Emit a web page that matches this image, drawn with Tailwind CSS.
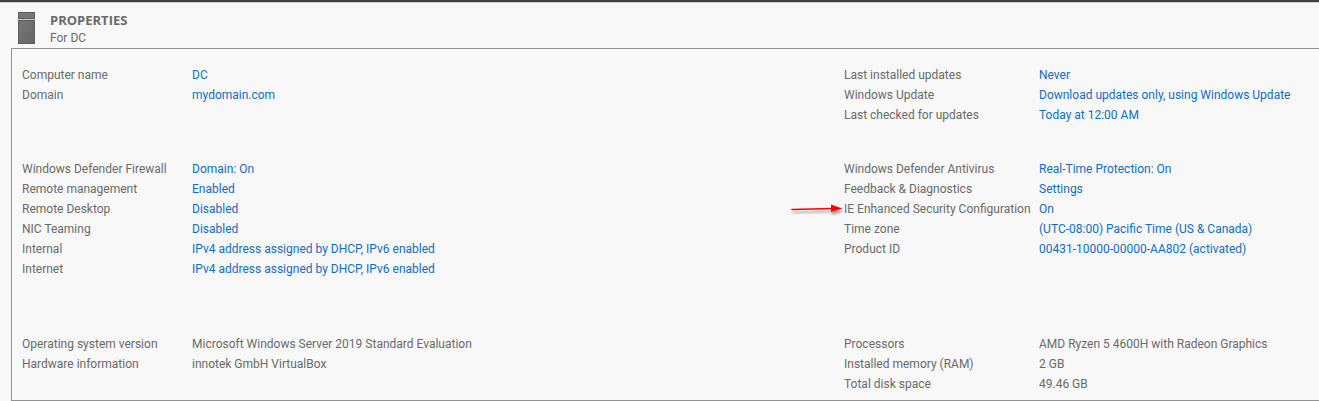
<!DOCTYPE html>
<html lang="en">
<head>
<meta charset="utf-8">
<meta name="viewport" content="width=device-width, initial-scale=1">
<title>Properties for DC</title>
<script src="https://cdn.jsdelivr.net/npm/@tailwindcss/browser@4"></script>
</head>
<body class="min-h-screen bg-[#f8f8f8] font-['Roboto','Noto_Sans',sans-serif] text-[12px] leading-5 text-[#6a6a6a]">
<main class="flex min-h-screen flex-col border-t-2 border-[#414141]">
  <header class="flex h-[46px] items-start gap-[15px] border-t border-[#d0d0d0] pt-[9px] pl-[18px]">
    <svg class="h-8 w-[17px] shrink-0" viewBox="0 0 17 32" aria-hidden="true">
      <defs><linearGradient id="tower" x1="0" y1="0" x2="1" y2="1"><stop offset="0" stop-color="#777"/><stop offset="1" stop-color="#666"/></linearGradient></defs>
      <rect x=".5" y=".5" width="16" height="6" fill="#777" stroke="#5d5d5d"/>
      <rect y="7" width="17" height="1" fill="#c9cccb"/>
      <rect x=".5" y="8.500" width="16" height="23" fill="url(#tower)" stroke="#5d5d5d"/>
    </svg>
    <div>
      <h1 class="font-['Open_Sans','Noto_Sans',sans-serif] text-[13px] leading-4 font-bold">PROPERTIES</h1>
      <p class="leading-5">For DC</p>
    </div>
  </header>
  <section class="ml-[11px] grid grow grid-cols-[822fr_475fr] content-start border-y border-l border-[#929292] pt-4 pb-1.5 pl-2.5">
    <dl class="grid grid-cols-[170px_1fr] content-start">
      <dt>Computer name</dt><dd><a href="#" class="text-[#106ebe]">DC</a></dd>
      <dt>Domain</dt><dd><a href="#" class="text-[#106ebe]">mydomain.com</a></dd>
    </dl>
    <dl class="grid grid-cols-[195px_1fr] content-start whitespace-nowrap">
      <dt>Last installed updates</dt><dd><a href="#" class="text-[#106ebe]">Never</a></dd>
      <dt>Windows Update</dt><dd><a href="#" class="text-[#106ebe]">Download updates only, using Windows Update</a></dd>
      <dt>Last checked for updates</dt><dd><a href="#" class="text-[#106ebe]">Today at 12:00 AM</a></dd>
    </dl>
    <dl class="mt-[34px] grid grid-cols-[170px_1fr] content-start">
      <dt>Windows Defender Firewall</dt><dd><a href="#" class="text-[#106ebe]">Domain: On</a></dd>
      <dt>Remote management</dt><dd><a href="#" class="text-[#106ebe]">Enabled</a></dd>
      <dt>Remote Desktop</dt><dd><a href="#" class="text-[#106ebe]">Disabled</a></dd>
      <dt>NIC Teaming</dt><dd><a href="#" class="text-[#106ebe]">Disabled</a></dd>
      <dt>Internal</dt><dd><a href="#" class="text-[#106ebe]">IPv4 address assigned by DHCP, IPv6 enabled</a></dd>
      <dt>Internet</dt><dd><a href="#" class="text-[#106ebe]">IPv4 address assigned by DHCP, IPv6 enabled</a></dd>
    </dl>
    <dl class="mt-[34px] grid grid-cols-[195px_1fr] content-start whitespace-nowrap">
      <dt>Windows Defender Antivirus</dt><dd><a href="#" class="text-[#106ebe]">Real-Time Protection: On</a></dd>
      <dt>Feedback &amp; Diagnostics</dt><dd><a href="#" class="text-[#106ebe]">Settings</a></dd>
      <dt class="relative">
        <svg class="absolute top-1 right-full h-4 w-14" viewBox="0 0 56 16" aria-hidden="true">
          <defs><filter id="shade" x="-10%" y="-50%" width="120%" height="220%"><feDropShadow dx="1" dy="3" stdDeviation="1" flood-color="#000" flood-opacity=".35"/></filter></defs>
          <g filter="url(#shade)"><path d="M4 6.500 44 5.500" stroke="#f00" stroke-width="1.600" stroke-linecap="round"/><path d="M43 1.500 54.500 5.500 43 9Z" fill="#f00"/></g>
        </svg>IE Enhanced Security Configuration</dt><dd><a href="#" class="text-[#106ebe]">On</a></dd>
      <dt>Time zone</dt><dd><a href="#" class="text-[#106ebe]">(UTC-08:00) Pacific Time (US &amp; Canada)</a></dd>
      <dt>Product ID</dt><dd><a href="#" class="text-[#106ebe]">00431-10000-00000-AA802 (activated)</a></dd>
    </dl>
    <dl class="mt-[55px] grid grid-cols-[170px_1fr] content-start">
      <dt>Operating system version</dt><dd>Microsoft Windows Server 2019 Standard Evaluation</dd>
      <dt>Hardware information</dt><dd>innotek GmbH VirtualBox</dd>
    </dl>
    <dl class="mt-[55px] grid grid-cols-[195px_1fr] content-start whitespace-nowrap">
      <dt>Processors</dt><dd>AMD Ryzen 5 4600H with Radeon Graphics</dd>
      <dt>Installed memory (RAM)</dt><dd>2 GB</dd>
      <dt>Total disk space</dt><dd>49.46 GB</dd>
    </dl>
  </section>
</main>
</body>
</html>
